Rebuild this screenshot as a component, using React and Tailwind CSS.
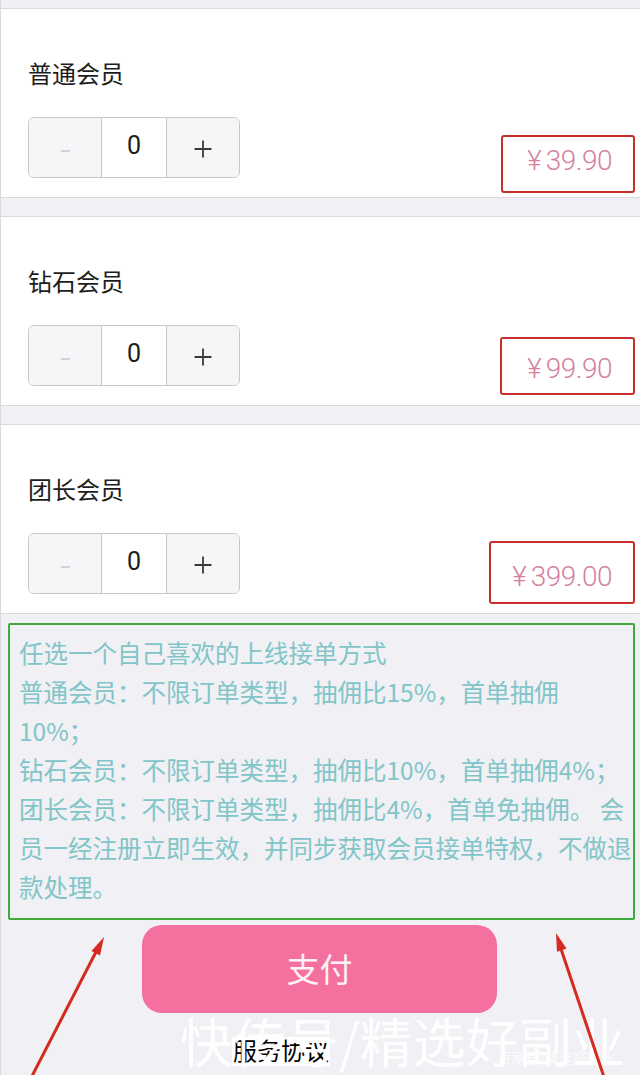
import React from "react";

const cjk = "font-['Noto_Sans_CJK_SC','Noto_Sans',sans-serif]";

function Stepper() {
  return (
    <div className="flex h-[61px] w-[212px] overflow-hidden rounded-[6px] border-[1.5px] border-[#c6c6cb]">
      <div className="flex w-[72px] items-center justify-center bg-[#f6f6f9]">
        <div className="mt-[7px] h-[1.5px] w-[9px] bg-[#d2d2d7]" />
      </div>
      <div className="flex w-[66px] items-center justify-center border-x-[1.5px] border-[#c6c6cb] bg-white pb-[4px] font-['Roboto',sans-serif] text-[25px] text-[#1c1c1c]">
        0
      </div>
      <div className="flex flex-1 items-center justify-center bg-[#f6f6f9] pt-[3px]">
        <svg width="18" height="18" viewBox="0 0 18 18">
          <line x1="9" y1="0.5" x2="9" y2="17.5" stroke="#3a3a3a" strokeWidth="1.8" />
          <line x1="0.5" y1="9" x2="17.5" y2="9" stroke="#3a3a3a" strokeWidth="1.8" />
        </svg>
      </div>
    </div>
  );
}

function Card({ title, price, boxClass }) {
  return (
    <div className="relative h-[190px] border-y border-[#d9d9de] bg-white px-[27px] pt-[48px]">
      <div className={`${cjk} h-[32px] text-[24px] leading-[32px] text-[#1d1d1d]`}>{title}</div>
      <div className="mt-[28px] flex items-start justify-between">
        <Stepper />
        <div className="mr-[1px] mt-[26px] flex items-baseline font-['Roboto',sans-serif] text-[28px] font-light leading-[36px] text-[#d57fa2]">
          <span className="mr-[4px]">¥</span>
          <span className="tracking-[-0.5px]">{price}</span>
        </div>
      </div>
      <div className={`absolute rounded-[3px] border-2 border-[#c9302c] ${boxClass}`} />
    </div>
  );
}

export default function App() {
  const lines = [
    "任选一个自己喜欢的上线接单方式",
    "普通会员：不限订单类型，抽佣比15%，首单抽佣",
    "10%；",
    "钻石会员：不限订单类型，抽佣比10%，首单抽佣4%；",
    "团长会员：不限订单类型，抽佣比4%，首单免抽佣。 会",
    "员一经注册立即生效，并同步获取会员接单特权，不做退",
    "款处理。",
  ];
  return (
    <div className="relative h-[1075px] w-[640px] overflow-hidden border-l border-[#dadade] bg-[#f0f0f5]">
      <div className="h-[8px] bg-[#efeff4]" />
      <Card title="普通会员" price="39.90" boxClass="left-[500px] top-[126px] h-[58px] w-[134px]" />
      <div className="h-[18px]" />
      <Card title="钻石会员" price="99.90" boxClass="left-[499px] top-[120px] h-[58px] w-[135px]" />
      <div className="h-[18px]" />
      <Card title="团长会员" price="399.00" boxClass="left-[488px] top-[116px] h-[63px] w-[146px]" />

      <div className="ml-[7px] mt-[9px] h-[297px] w-[627px] overflow-hidden rounded-[2px] border-2 border-[#3fab3b] pl-[9px] pt-[8px]">
        {lines.map((l, i) => (
          <div
            key={i}
            className={`${cjk} whitespace-nowrap text-[24.5px] leading-[39px] text-[#82c5c8]`}
          >
            {l}
          </div>
        ))}
      </div>

      <div className="ml-[141px] mt-[5px] flex h-[88px] w-[355px] items-center justify-center rounded-[20px] bg-[#f3709f]">
        <span className={`${cjk} text-[33px] text-[#fdf1f5]`}>支付</span>
      </div>

      <div className="ml-[231px] mt-[24px] w-fit bg-white px-[1px]">
        <span className={`${cjk} text-[24px] leading-[26px] text-black`}>服务协议</span>
      </div>

      {/* watermark */}
      <div
        className={`${cjk} pointer-events-none absolute left-[179px] top-[1014px] whitespace-nowrap text-[53px] font-normal leading-[53px] text-white opacity-95`}
      >
        快传号/精选好副业
      </div>
      <div
        className={`${cjk} pointer-events-none absolute left-[496px] top-[1049px] whitespace-nowrap text-[14px] leading-[16px] text-white opacity-80`}
      >
        百家号/精选好副业
      </div>

      {/* annotation arrows */}
      <svg
        className="pointer-events-none absolute left-0 top-0"
        width="640"
        height="1075"
        viewBox="0 0 640 1075"
      >
        <line x1="29" y1="1080" x2="97" y2="948" stroke="#d42a1f" strokeWidth="3" strokeLinecap="round" />
        <polygon points="103,937 99,955.5 90.5,951" fill="#d42a1f" />
        <line x1="604" y1="1080" x2="559" y2="946" stroke="#d42a1f" strokeWidth="3" strokeLinecap="round" />
        <polygon points="555,933 565.5,948.5 556,951.8" fill="#d42a1f" />
      </svg>
    </div>
  );
}
